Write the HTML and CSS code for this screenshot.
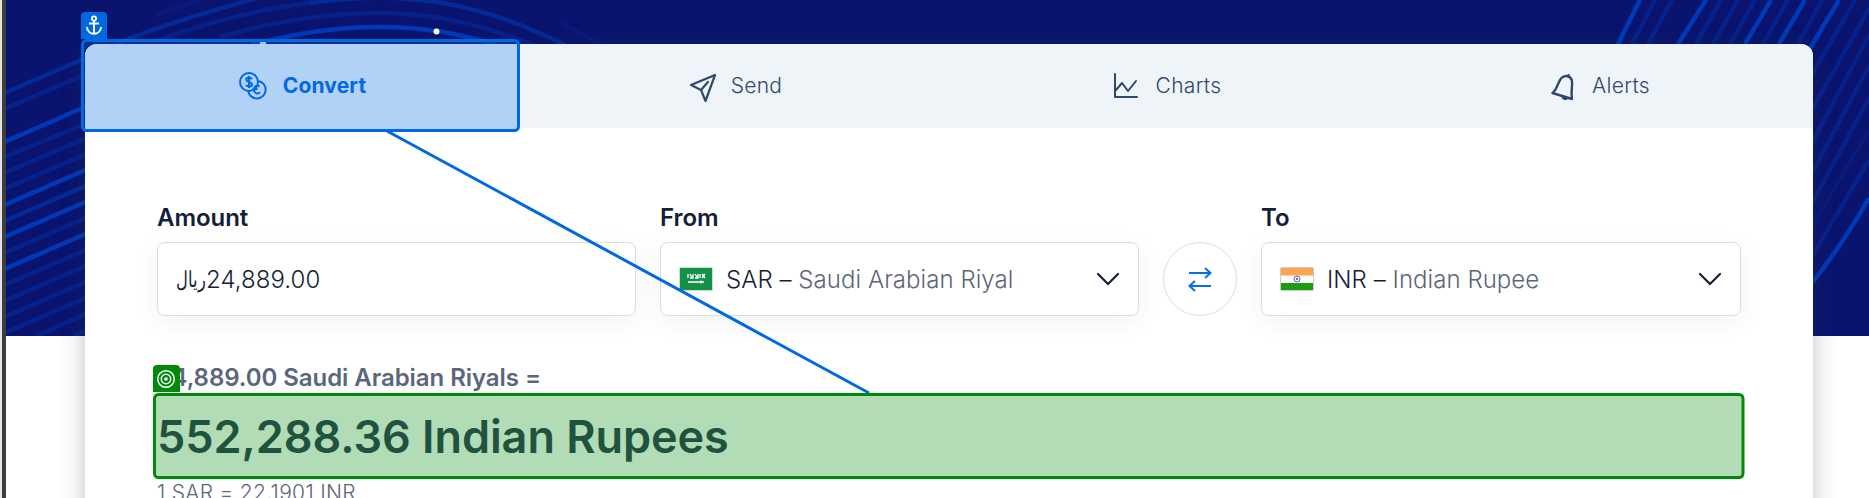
FILE: index.html
```html
<!DOCTYPE html>
<html lang="en">
<head>
<meta charset="utf-8">
<title>Currency Converter</title>
<link rel="stylesheet" href="styles.css">
</head>
<body>
<div class="page">
  <svg class="backdrop" width="1869" height="336" viewBox="0 0 1869 336" aria-hidden="true">
    <rect width="1869" height="336" fill="#0a146e"/>
    <g fill="none" stroke-width="4.500">
      <g stroke="#0039b8">
        <path d="M0 144Q60 118 100 100M0 207L90 168M0 239L90 200M0 271L90 232"/>
        <path d="M250 45Q318 27 380 27T495 45"/>
        <path d="M1640 0L1618 44M1706 0L1678 44M1771 0L1745 44M1805 0L1779 44M1839 0L1809 50M1869 198Q1842 245 1812 283"/>
      </g>
      <g stroke="#042a98">
        <path d="M0 95L81 60L133 37Q190 16 258 -2M0 223L90 184"/>
        <path d="M310 3Q376 -7 437 2Q500 12 565 45"/>
      </g>
      <g stroke="#07218a">
        <path d="M0 111L100 68M0 159L100 118M0 175L100 132M0 191L100 148M0 255L90 216M0 287L90 248M0 303L90 264M0 319L90 280M0 335L90 296M36 336L90 312M74 336L90 329"/>
        <path d="M155 41Q240 11 310 3M220 37Q303 13 380 13Q455 13 535 46"/>
        <path d="M1655 0L1632 44M1672 0L1648 44M1721 0L1696 44M1738 0L1713 44M1755 0L1730 44M1788 0L1763 44M1822 0L1798 44M1855 0L1811 76M1869 8L1811 112M1869 35L1811 145M1869 66L1811 175M1869 98L1811 205M1869 160L1811 258"/>
      </g>
      <path stroke="#091a7a" d="M155 15L203 -1M561 23L602 45M1869 130L1811 228"/>
    </g>
    <circle cx="436.500" cy="31.500" r="3" fill="#fff"/>
    <circle cx="263" cy="43.500" r="3" fill="#fff"/>
  </svg>
  <div class="window-edge"></div>
  <main class="card">
    <nav class="tabs">
      <a class="tab tab-active"><svg width="30" height="30" viewBox="0 0 30 30" fill="none" stroke="currentColor" stroke-width="2"><circle cx="11" cy="11" r="9"/><path d="M20.500 10a8.800 8.800 0 1 1-10.300 10.300"/><path d="M14 8.200C13 6.300 8.200 6.300 8.200 8.700S14 11 14 13.500s-5 2.600-6 .4M11 5v12M21.500 15.500c-4-2.200-5.500 1-5.500 3.500s3 5 6 2.300M14.500 18h5"/></svg>Convert</a>
      <a class="tab tab-send"><svg width="30" height="30" viewBox="0 0 30 30" fill="none" stroke="currentColor" stroke-width="2.200" stroke-linejoin="round" stroke-linecap="round"><path d="M3 13L27 3 17.500 29 13 18zM13 18l7-8"/></svg>Send</a>
      <a class="tab tab-charts"><svg width="26" height="28" viewBox="0 0 26 28" fill="none" stroke="currentColor" stroke-width="2" stroke-linecap="round" stroke-linejoin="round"><path d="M2 2v23h22M3 18l6-7 6 8 8-10"/></svg>Charts</a>
      <a class="tab tab-alerts"><svg width="26" height="28" viewBox="0 0 26 28" fill="none" stroke="currentColor" stroke-width="2.400" stroke-linejoin="round" stroke-linecap="round"><path d="M2.500 20C9 15 8 2 17 3c9 2 3 12 5 23zM12.500 23.500c.5 2.500 3.500 3 4.500 1.500M18.500 3.200l.2-1"/></svg>Alerts</a>
    </nav>
    <section class="converter">
      <div class="fields">
        <div class="field">
          <label class="label">Amount</label>
          <div class="box amount"><span class="riyal" lang="ar" dir="rtl">ريال</span><span>24,889.00</span></div>
        </div>
        <div class="field">
          <label class="label">From</label>
          <div class="box select">
            <svg class="flag" width="34" height="24" viewBox="0 0 34 24"><rect x=".5" y=".5" width="33" height="23" rx="1" fill="#149049" stroke="#c9dcd2"/><path d="M9 7v4M11 7l2 4M14 7v4h-3M16 7l2 3M19 7v4h-3M21 7v4M23 7l3 4M26 7l-3 4M9 15h16M22 13.500v3" stroke="#fff" stroke-width="1.300" fill="none"/></svg>
            <span class="code">SAR – <span class="name">Saudi Arabian Riyal</span></span>
            <svg class="chevron" width="24" height="14" viewBox="0 0 24 14"><path d="M2 2l10 10L22 2"/></svg>
          </div>
        </div>
        <button class="swap" aria-label="Swap"><svg width="26" height="28" viewBox="0 0 26 28"><path d="M2 8h21M18 3l5.500 5-5.500 5M24 21H3M8 16l-5.500 5L8 26"/></svg></button>
        <div class="field">
          <label class="label">To</label>
          <div class="box select">
            <svg class="flag" width="34" height="24" viewBox="0 0 34 24"><rect x=".5" y=".5" width="33" height="23" rx="1" fill="#fff" stroke="#c8cbd3"/><path fill="#ffa44b" d="M1 1h32v7.500H1z"/><path fill="#1c9d10" d="M1 16h32v7H1z"/><circle cx="17" cy="12" r="3" fill="none" stroke="#5b5bc0"/><circle cx="17" cy="12" r="1.100" fill="#4646b4"/></svg>
            <span class="code">INR – <span class="name">Indian Rupee</span></span>
            <svg class="chevron" width="24" height="14" viewBox="0 0 24 14"><path d="M2 2l10 10L22 2"/></svg>
          </div>
        </div>
      </div>
      <p class="source">24,889.00 Saudi Arabian Riyals =</p>
      <p class="result">552,288.36 Indian Rupees</p>
      <p class="rate">1 SAR = 22.1901 INR</p>
    </section>
  </main>
  <svg class="overlay" width="1869" height="498" viewBox="0 0 1869 498">
    <path d="M387 131L869 393" stroke="#0068e1" stroke-width="3"/>
    <rect x="82.500" y="40.500" width="436" height="90" rx="4" fill="#0068e1" fill-opacity=".3"/>
    <rect x="82.500" y="40.500" width="436" height="90" rx="4" fill="none" stroke="#0068e1" stroke-width="3"/>
    <path d="M81 39V16a4 4 0 0 1 4-4h18a4 4 0 0 1 4 4v23z" fill="#0068e1"/>
    <g stroke="#fff" fill="none" stroke-width="1.800"><circle cx="94" cy="18.500" r="2.100"/><path d="M94 21v12.500M89 23.500h10M87 27c0 9 14 9 14 0"/></g>
    <rect x="154.500" y="394.500" width="1588.500" height="83" rx="4" fill="#008a09" fill-opacity=".3"/>
    <rect x="154.500" y="394.500" width="1588.500" height="83" rx="4" fill="none" stroke="#008a09" stroke-width="3"/>
    <path d="M153 392v-23a4 4 0 0 1 4-4h19a4 4 0 0 1 4 4v23z" fill="#008a09"/>
    <g stroke="#fff" fill="none" stroke-width="1.500"><circle cx="166" cy="379" r="8.300"/><circle cx="166" cy="379" r="4.700"/></g><circle cx="166" cy="379" r="1.800" fill="#fff"/>
  </svg>
</div>
</body>
</html>
```
FILE: styles.css
```css
* { box-sizing: border-box; }
body { margin: 0; background: #fff; font-family: Inter, "Open Sans", sans-serif; color: #141e37; }
.page { position: relative; width: 1869px; height: 498px; overflow: hidden; padding: 44px 56px 0 85px; }
.backdrop, .overlay { position: absolute; left: 0; top: 0; }
.overlay { pointer-events: none; }
.window-edge { position: absolute; left: 0; top: 0; width: 6px; height: 498px; background: #3c3f3e; border-left: 2px solid #e4e6e5; }
.card { position: relative; height: 600px; background: #fff; border-radius: 12px; box-shadow: 0 6px 24px rgba(35, 55, 80, .3); }
.tabs { display: grid; grid-template-columns: repeat(4, 1fr); height: 84px; background: #eff4f9; border-radius: 12px 12px 0 0; overflow: hidden; }
.tab { display: flex; align-items: center; justify-content: center; gap: 15px; font-size: 21px; line-height: 30px; font-weight: 300; letter-spacing: .3px; color: #2f486d; }
.tab-active { padding-left: 2px; background: #fff; color: #006be6; font-weight: 650; letter-spacing: .15px; }
.tab-send { gap: 13px; padding-left: 4px; }
.tab-send svg, .tab-alerts svg { margin-top: 2px; }
.tab-charts { gap: 17px; padding-left: 4px; }
.tab-alerts { gap: 16px; padding-left: 6px; }
.converter { padding: 72px 72px 0; }
.fields { display: grid; grid-template-columns: 479px 479px 74px 1fr; column-gap: 24px; align-items: end; }
.label { display: block; font-size: 24px; line-height: 36px; font-weight: 600; letter-spacing: -.05px; margin-bottom: 6px; }
.box { display: flex; align-items: center; height: 74px; padding: 0 18px; border: 1px solid #dcdde0; border-radius: 8px; background: #fff; box-shadow: 0 6px 24px rgba(20, 30, 55, .06); font-size: 24px; font-weight: 300; letter-spacing: .05px; }
.riyal { width: 30px; font: 200 22px "DejaVu Sans", sans-serif; letter-spacing: 0; white-space: nowrap; transform: scaleX(.74); transform-origin: right center; }
.select .flag { margin-right: 13px; }
.name { color: #5c667b; }
.chevron { margin-left: auto; fill: none; stroke: #141e37; stroke-width: 2.200; stroke-linecap: round; }
.swap { display: grid; place-items: center; width: 74px; height: 74px; padding: 0; border: 1px solid #dcdde0; border-radius: 50%; background: #fff; }
.swap path { fill: none; stroke: #0071eb; stroke-width: 2; }
p { margin: 0; }
.source { margin-top: 44px; font-size: 24px; line-height: 36px; font-weight: 600; letter-spacing: -.06px; color: #5c667b; }
.result { margin-top: 11px; font-size: 45px; line-height: 60px; font-weight: 600; letter-spacing: -.06px; color: #2e3c57; }
.rate { margin-top: 11px; font-size: 21px; line-height: 30px; font-weight: 300; letter-spacing: .3px; color: #5c667b; }
```
